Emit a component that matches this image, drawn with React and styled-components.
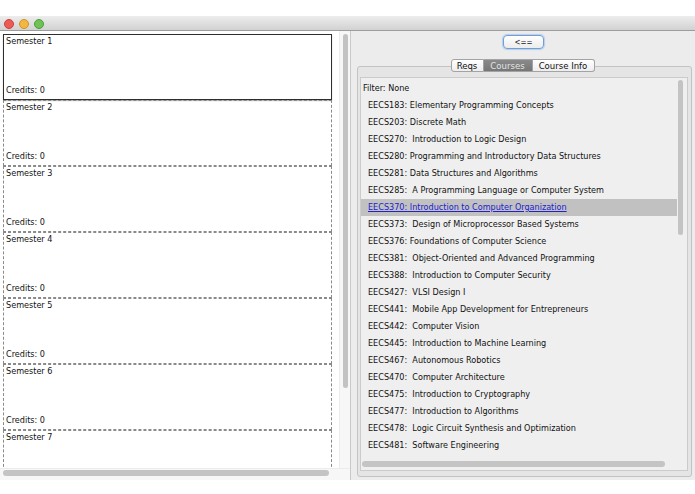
import React from "react";
import styled, { createGlobalStyle, css } from "styled-components";

const GlobalStyle = createGlobalStyle`
  body {
    margin: 0;
    background: #ffffff;
    font-family: "DejaVu Sans Condensed", "DejaVu Sans", sans-serif;
    font-size: 9px;
    color: #111111;
  }
`;

const Window = styled.div`
  margin-top: 16px;
  height: 464px;
  width: 695px;
  background: #ececec;
  display: flex;
  flex-direction: column;
`;

const TitleBar = styled.div`
  height: 14px;
  background: linear-gradient(#ededed, #d2d2d2);
  border-bottom: 1px solid #9d9d9d;
  display: flex;
  align-items: center;
  gap: 5px;
  padding-left: 4px;
`;

const Light = styled.span`
  width: 8px;
  height: 8px;
  border-radius: 50%;
  background: ${p => p.color};
  border: 0.5px solid ${p => p.edge};
  margin-top: 1px;
`;

const Body = styled.div`
  flex: 1;
  display: flex;
  min-height: 0;
`;

const LeftPane = styled.div`
  width: 350px;
  display: grid;
  grid-template-columns: 339px 11px;
  grid-template-rows: 437px 12px;
  background: #ffffff;
  border-right: 1px solid #c9c9c9;
`;

const Viewport = styled.div`
  padding: 3px 0 0 3px;
  overflow: hidden;
  background: #ffffff;
`;

const Semester = styled.div`
  box-sizing: border-box;
  width: 329px;
  height: 66px;
  flex-shrink: 0;
  display: flex;
  flex-direction: column;
  justify-content: space-between;
  padding: 1px 2px 3px 2px;
  line-height: 11px;
  ${p => p.active ? css`
    border: 1.5px solid #2e2e2e;
    box-shadow: 0 1px 1px rgba(0, 0, 0, 0.25);
  ` : css`
    border: 1px dashed #8a8a8a;
  `}
`;

const VTrack = styled.div`
  background: #f7f7f7;
  border-left: 1px solid #ececec;
  padding: 3px 0 0 3px;
`;

const VThumb = styled.div`
  width: 5px;
  height: ${p => p.size}px;
  border-radius: 3px;
  background: #c3c3c3;
`;

const HTrack = styled.div`
  grid-column: 1 / span 2;
  background: #f7f7f7;
  border-top: 1px solid #ececec;
  padding: 1px 0 0 3px;
`;

const HThumb = styled.div`
  width: ${p => p.size}px;
  height: 6px;
  border-radius: 3px;
  background: #c4c4c4;
`;

const RightPane = styled.div`
  flex: 1;
  display: flex;
  flex-direction: column;
  align-items: center;
  padding: 4px 3px 3px 6px;
  background: #ececec;
  min-width: 0;
`;

const ArrowButton = styled.button`
  box-sizing: border-box;
  width: 41px;
  height: 14px;
  padding: 0;
  margin-left: -2px;
  border: 1px solid #6f9fd6;
  border-radius: 4px;
  background: linear-gradient(#ffffff, #ececec);
  box-shadow: 0 0 1px 1px rgba(120, 170, 230, 0.45);
  font-family: inherit;
  font-size: 8px;
  color: #222222;
  line-height: 11px;
`;

const TabRow = styled.div`
  display: flex;
  margin-top: 10px;
  margin-left: -4px;
  position: relative;
  z-index: 1;
`;

const Tab = styled.div`
  box-sizing: border-box;
  height: 13px;
  width: ${p => p.w}px;
  display: flex;
  align-items: center;
  justify-content: center;
  font-size: 9.5px;
  border: 1px solid #a3a3a3;
  border-left: ${p => p.first ? "1px solid #a3a3a3" : "none"};
  border-radius: ${p => p.first ? "3px 0 0 3px" : p.last ? "0 3px 3px 0" : "0"};
  ${p => p.selected ? css`
    background: linear-gradient(#8a8a8a, #767676);
    color: #e4e4e4;
  ` : css`
    background: linear-gradient(#ffffff, #ededed);
    color: #111111;
  `}
`;

const TabPane = styled.div`
  align-self: stretch;
  flex: 1;
  margin-top: -6px;
  border: 1px solid #c3c3c3;
  border-radius: 3px;
  background: #e5e5e5;
  padding: 10px 3px 5px 2px;
  display: flex;
  min-height: 0;
`;

const List = styled.div`
  flex: 1;
  border: 1px solid #cbcbcb;
  background: #efefef;
  display: grid;
  grid-template-columns: 1fr 10px;
  grid-template-rows: 1fr 9px;
  min-height: 0;
`;

const Rows = styled.div`
  padding-top: 2px;
  overflow: hidden;
`;

const Row = styled.div`
  height: 17px;
  line-height: 17px;
  white-space: pre;
  padding-left: ${p => p.header ? 2 : 7}px;
  ${p => p.selected && css`
    background: #c1c1c1;
    color: #2222cc;
    text-decoration: underline;
  `}
`;

const ListVTrack = styled.div`
  padding: 2px 0 0 1px;
`;

const ListHTrack = styled.div`
  grid-column: 1 / span 2;
  padding: 0 0 0 1px;
`;

const courses = [
  "EECS183: Elementary Programming Concepts",
  "EECS203: Discrete Math",
  "EECS270:  Introduction to Logic Design",
  "EECS280: Programming and Introductory Data Structures",
  "EECS281: Data Structures and Algorithms",
  "EECS285:  A Programming Language or Computer System",
  "EECS370: Introduction to Computer Organization",
  "EECS373:  Design of Microprocessor Based Systems",
  "EECS376: Foundations of Computer Science",
  "EECS381:  Object-Oriented and Advanced Programming",
  "EECS388:  Introduction to Computer Security",
  "EECS427:  VLSI Design I",
  "EECS441:  Mobile App Development for Entrepreneurs",
  "EECS442:  Computer Vision",
  "EECS445:  Introduction to Machine Learning",
  "EECS467:  Autonomous Robotics",
  "EECS470:  Computer Architecture",
  "EECS475:  Introduction to Cryptography",
  "EECS477:  Introduction to Algorithms",
  "EECS478:  Logic Circuit Synthesis and Optimization",
  "EECS481:  Software Engineering",
];

// the last semester is only partly scrolled into view
const semesters = [1, 2, 3, 4, 5, 6, 7];
const visibleCredits = 6;

function App() {
  return (
    <>
      <GlobalStyle />
      <Window>
        <TitleBar>
          <Light color="#ee5b55" edge="#c9423c" />
          <Light color="#f3b63f" edge="#cf922a" />
          <Light color="#6dc353" edge="#4e9e3a" />
        </TitleBar>
        <Body>
          <LeftPane>
            <Viewport>
              {semesters.map(n => (
                <Semester key={n} active={n === 1}>
                  <span>Semester {n}</span>
                  {n <= visibleCredits && <span>Credits: 0</span>}
                </Semester>
              ))}
            </Viewport>
            <VTrack>
              <VThumb size={354} />
            </VTrack>
            <HTrack>
              <HThumb size={326} />
            </HTrack>
          </LeftPane>
          <RightPane>
            <ArrowButton>{"<=="}</ArrowButton>
            <TabRow>
              <Tab first w={33}>Reqs</Tab>
              <Tab selected w={49}>Courses</Tab>
              <Tab last w={62}>Course Info</Tab>
            </TabRow>
            <TabPane>
              <List>
                <Rows>
                  <Row header>Filter: None</Row>
                  {courses.map(c => (
                    <Row key={c} selected={c.startsWith("EECS370")}>{c}</Row>
                  ))}
                </Rows>
                <ListVTrack>
                  <VThumb size={155} />
                </ListVTrack>
                <ListHTrack>
                  <HThumb size={303} />
                </ListHTrack>
              </List>
            </TabPane>
          </RightPane>
        </Body>
      </Window>
    </>
  );
}

export default App;
